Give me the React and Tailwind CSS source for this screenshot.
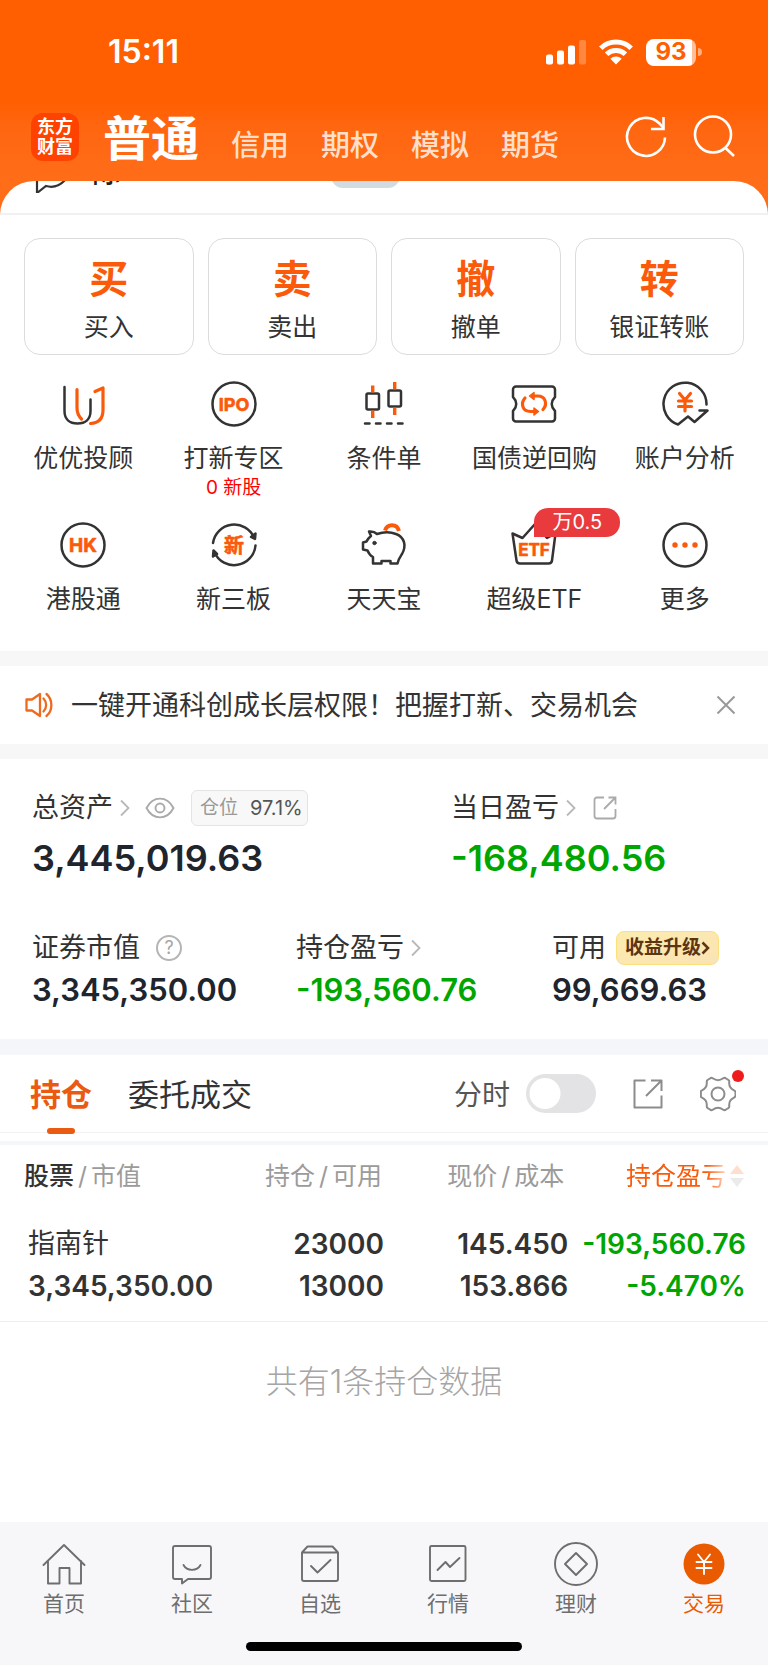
import { useState } from 'react';

const DARK = '#333333';
const ORANGE = '#fa5a0a';

/* ---------- Status bar ---------- */

const StatusBar = () => (
  <div className="flex h-[104px] items-center justify-between pl-[108px] pr-[66px] text-white">
    <time className="text-[32px] leading-9 font-semibold">15:11</time>
    <div className="flex items-center gap-3">
      <svg viewBox="0 0 40 26" className="h-[26px] w-10" fill="currentColor" aria-hidden="true">
        <rect x="0" y="15.500" width="7" height="10" rx="2" />
        <rect x="11" y="11.500" width="7" height="14" rx="2" />
        <rect x="22" y="6.500" width="7" height="19" rx="2" />
        <rect x="33" y="1" width="7" height="24.500" rx="2" opacity="0.25" />
      </svg>
      <svg viewBox="0 0 36 26" className="h-[26px] w-9" aria-hidden="true">
        <g fill="none" stroke="currentColor" strokeWidth="5">
          <path d="M2.800 9.200a22 22 0 0 1 30.400 0" />
          <path d="M8.600 15.200a13.600 13.600 0 0 1 18.800 0" />
        </g>
        <path d="M18 25.500l-5.600-5.700a8 8 0 0 1 11.200 0z" fill="currentColor" />
      </svg>
      <div className="flex items-center gap-0.5">
        <div className="flex h-[27px] w-[50px] items-center justify-center rounded-lg bg-linear-to-r from-white from-92% to-white/60 to-92% text-2xl leading-none font-bold text-[#ff5f00]">
          93
        </div>
        <span className="h-2 w-1 rounded-r-full bg-white/50" />
      </div>
    </div>
  </div>
);

/* ---------- Header ---------- */

const ACCOUNTS = ['信用', '期权', '模拟', '期货'];

const Header = () => (
  <header className="bg-linear-to-b from-[#ff5f00] from-56% via-[#ff6610] via-70% to-[#ff6d19]">
    <StatusBar />
    <div className="flex h-[77px] items-center pr-8 pl-[31px]">
      <div className="-mt-3 flex h-12 w-12 flex-col items-center justify-center rounded-xl bg-[#ff4200] text-[18px] leading-5 font-bold text-white">
        <span>东方</span>
        <span>财富</span>
      </div>
      <nav className="ml-6 flex flex-1 items-end gap-8 pb-2">
        <a href="#normal" className="text-[48px] leading-[54px] font-bold text-white">普通</a>
        {ACCOUNTS.map((name) => (
          <a key={name} href={`#${name}`} className="text-[29px] leading-10 font-medium text-[#ffdfca]">
            {name}
          </a>
        ))}
      </nav>
      <div className="-mt-3.5 flex items-center gap-6 text-white">
        <button type="button" aria-label="刷新">
          <svg viewBox="0 0 44 44" className="h-11 w-11" fill="none" stroke="currentColor" strokeWidth="2.600">
            <path d="M41 23.500A19 19 0 1 1 35.500 9.500L39 13.500" />
            <path d="M39.500 3v12H27" />
          </svg>
        </button>
        <button type="button" aria-label="搜索">
          <svg viewBox="0 0 44 44" className="h-11 w-11" fill="none" stroke="currentColor" strokeWidth="2.600">
            <circle cx="21" cy="20.500" r="18" />
            <path d="M33 33.500l9 8.500" />
          </svg>
        </button>
      </div>
    </div>
  </header>
);

/* Row that is scrolled away under the header */
const ScrolledRow = () => (
  <div className="bg-[#ff6d19]">
    <div className="flex h-[34px] items-end overflow-hidden rounded-t-[34px] border-b-2 border-[#f1f1f3] bg-white pl-8">
      <div className="mb-[26px] flex flex-1 items-end">
        <svg viewBox="0 0 40 40" className="-mb-1.5 h-10 w-10" fill="none" stroke={DARK} strokeWidth="2.200">
          <path d="M5 40V27C-4 12 8 2 20 2s23 14 14 24c-6 7-13 9-20 7z" />
        </svg>
        <span className="ml-5 text-[28px] leading-7 font-medium text-[#222222]">际</span>
      </div>
      <span className="mr-[368px] mb-[25px] h-6 w-[69px] rounded-b-xl bg-[#d3dbe2]" />
    </div>
  </div>
);

/* ---------- Trade buttons ---------- */

const TRADES = [
  { mark: '买', label: '买入' },
  { mark: '卖', label: '卖出' },
  { mark: '撤', label: '撤单' },
  { mark: '转', label: '银证转账' },
];

const TradeButtons = () => (
  <div className="grid grid-cols-4 gap-3.5 px-6 pt-[23px]">
    {TRADES.map(({ mark, label }) => (
      <button
        key={label}
        type="button"
        className="flex h-[117px] flex-col items-center gap-3 rounded-2xl border border-[#dcdcdc] pt-5"
      >
        <span className="text-[39px] leading-10 font-bold text-[#fa5a0a]">{mark}</span>
        <span className="text-[25px] leading-8 text-[#333333]">{label}</span>
      </button>
    ))}
  </div>
);

/* ---------- Function icons ---------- */

const FuncSvg = ({ children }) => (
  <svg
    viewBox="0 0 48 48"
    className="h-12 w-12"
    fill="none"
    stroke={DARK}
    strokeWidth="2.500"
    strokeLinecap="round"
    strokeLinejoin="round"
    aria-hidden="true"
  >
    {children}
  </svg>
);

const IconText = ({ size, y, children }) => (
  <text
    x="24"
    y={y}
    fontSize={size}
    fontWeight="700"
    textAnchor="middle"
    fill={ORANGE}
    stroke={ORANGE}
    strokeWidth="0.600"
  >
    {children}
  </text>
);

const AdvisorIcon = () => (
  <FuncSvg>
    <path d="M5.500 7v24c0 8 5 12.500 13 12.500S31.500 39 31.500 31V19.500" />
    <g stroke={ORANGE} strokeWidth="3.200">
      <path d="M18 9.500V28c0 5 1.500 8 4.500 11" />
      <path d="M36 11.500l8-3.500v22c0 8-4 13-12.500 13.500" />
    </g>
  </FuncSvg>
);

const IpoIcon = () => (
  <FuncSvg>
    <circle cx="24" cy="24" r="21.500" />
    <IconText size="18" y="30.500">IPO</IconText>
  </FuncSvg>
);

const CandleIcon = () => (
  <FuncSvg>
    <rect x="6.500" y="13.500" width="12.500" height="16" rx="1.500" />
    <rect x="28.500" y="10.500" width="12.500" height="16" rx="1.500" />
    <g stroke={ORANGE} strokeWidth="3.400" strokeLinecap="butt">
      <path d="M12.700 5.500v7M12.700 30.500v7.500M34.700 2v7.500M34.700 27.500V35" />
    </g>
    <path d="M5 43.500h4.500M16 43.500h4.500M27 43.500h4.500M38 43.500h4.500" />
  </FuncSvg>
);

const RepoIcon = () => (
  <FuncSvg>
    <path d="M6 6.500h36a3 3 0 0 1 3 3v7.500l-2.500 3.500q-1.500 3.500 0 7L45 31v7.500a3 3 0 0 1-3 3H6a3 3 0 0 1-3-3V31l2.500-3.500q1.500-3.500 0-7L3 17V9.500a3 3 0 0 1 3-3z" />
    <g stroke={ORANGE} strokeWidth="3.200">
      <path d="M15 18c-4.500 5-3 13.500 5.500 13.500h5" />
      <path d="M24 28l4.500 3.500-4.500 3.500z" fill={ORANGE} strokeWidth="1.500" />
      <path d="M33 29.500c4.500-5 3-13.500-5.500-13.500h-5" />
      <path d="M24 12.500L19.500 16l4.500 3.500z" fill={ORANGE} strokeWidth="1.500" />
    </g>
  </FuncSvg>
);

const AnalysisIcon = () => (
  <FuncSvg>
    <path d="M45.500 24.500A21.500 21.500 0 1 0 17 44.500l10-8 6.500 5.500 13-11.500h-8" />
    <g stroke={ORANGE} strokeWidth="3.200">
      <path d="M18.500 13.500l5.500 6.500 5.500-6.500M24 20.500V31M17.500 21h13M17.500 26.500h13" />
    </g>
  </FuncSvg>
);

const HkIcon = () => (
  <FuncSvg>
    <circle cx="24" cy="24" r="21.500" />
    <IconText size="19" y="31">HK</IconText>
  </FuncSvg>
);

const NeeqIcon = () => (
  <FuncSvg>
    <path d="M3 22A21.500 21.500 0 0 1 44 16.500M45.500 24.500A21.500 21.500 0 0 1 4.500 31.500" />
    <path d="M45.500 12.500l-.5 5.500-4-2z M3 35.500l.5-6 3.500 3.500z" fill={DARK} />
    <IconText size="20" y="31.500">新</IconText>
  </FuncSvg>
);

const PiggyIcon = () => (
  <FuncSvg>
    <path d="M9 10.500q5-.5 8 2.500c6-2 14-2 19 0 9 3.500 10.500 12 6 20-2 3-3.500 5-4.500 9.500h-7V40h-9v2.500h-8.500v-6.500c-3-1.500-4.500-4-5.500-6.500L3 28.500v-7l3.500-1c1-2.500 2-3.500 4.500-5.500z" />
    <circle cx="14.500" cy="22" r="1.700" fill={DARK} strokeWidth="1" />
    <path d="M25 9.500c2-7 12-7.500 14 .5" stroke={ORANGE} strokeWidth="4" strokeLinecap="butt" />
  </FuncSvg>
);

const EtfIcon = () => (
  <FuncSvg>
    <path d="M2.500 12.500l10 4.500L25 3l12 14 8.500-4.500-3.500 27a3.500 3.500 0 0 1-3.500 3H10a3.500 3.500 0 0 1-3.500-3z" />
    <IconText size="17" y="35">ETF</IconText>
  </FuncSvg>
);

const MoreIcon = () => (
  <FuncSvg>
    <circle cx="24" cy="24" r="21.500" />
    <g fill={ORANGE} stroke="none">
      <circle cx="14" cy="24" r="2.700" />
      <circle cx="24" cy="24" r="2.700" />
      <circle cx="34" cy="24" r="2.700" />
    </g>
  </FuncSvg>
);

const FUNCTIONS = [
  { label: '优优投顾', Icon: AdvisorIcon },
  { label: '打新专区', Icon: IpoIcon, note: '0 新股' },
  { label: '条件单', Icon: CandleIcon },
  { label: '国债逆回购', Icon: RepoIcon },
  { label: '账户分析', Icon: AnalysisIcon },
  { label: '港股通', Icon: HkIcon },
  { label: '新三板', Icon: NeeqIcon },
  { label: '天天宝', Icon: PiggyIcon },
  { label: '超级ETF', Icon: EtfIcon, badge: '万0.5' },
  { label: '更多', Icon: MoreIcon },
];

const FunctionGrid = () => (
  <div className="mt-[25px] grid grid-cols-5 gap-y-5 px-2 pb-9">
    {FUNCTIONS.map(({ label, Icon, note, badge }) => (
      <a key={label} href={`#${label}`} className="flex flex-col items-center">
        <span className="relative">
          <Icon />
          {badge && (
            <span className="absolute -top-[13px] left-6 w-[86px] rounded-t-[14px] rounded-br-[14px] bg-[#e93b3d] text-center text-[20px] leading-[29px] text-white">
              {badge}
            </span>
          )}
        </span>
        <span className="mt-3.5 text-[25px] leading-8 text-[#333333]">{label}</span>
        {note && <span className="text-[19px] leading-[27px] text-[#ff0000]">{note}</span>}
      </a>
    ))}
  </div>
);

/* ---------- Notice ---------- */

const Notice = () => (
  <div className="flex h-[78px] items-center px-6">
    <svg viewBox="0 0 30 30" className="h-[30px] w-[30px]" fill="none" stroke="#ee6a1f" strokeWidth="2.300" strokeLinejoin="round" strokeLinecap="round">
      <path d="M2.500 9.500H8L16 4v22l-8-5.500H2.500z" />
      <path d="M19.500 8.500c3.500 3.500 3.500 9.500 0 13M22.500 4c6.500 5.500 6.500 16.500 0 22" />
    </svg>
    <p className="ml-[17px] flex-1 pt-0.5 text-[27px] leading-10 text-[#333333]">一键开通科创成长层权限！把握打新、交易机会</p>
    <button type="button" aria-label="关闭" className="mr-2 text-[#999999]">
      <svg viewBox="0 0 20 20" className="h-5 w-5" fill="none" stroke="currentColor" strokeWidth="2">
        <path d="M1.500 1.500l17 17M18.500 1.500l-17 17" />
      </svg>
    </button>
  </div>
);

/* ---------- Assets ---------- */

const Chevron = () => (
  <svg viewBox="0 0 12 18" className="ml-1.5 h-[18px] w-3" fill="none" stroke="#b8b8b8" strokeWidth="1.800" aria-hidden="true">
    <path d="M2 1.500L9.500 9 2 16.500" />
  </svg>
);

const ShareIcon = ({ className }) => (
  <svg viewBox="0 0 30 30" className={className} fill="none" stroke="currentColor" strokeWidth="2" strokeLinejoin="round" aria-hidden="true">
    <path d="M12.500 1.500h-11v27h27v-12" />
    <path d="M18 1.500h10.500V12M28 2L13 17" />
  </svg>
);

const Assets = () => (
  <section className="px-8 pt-[31px] pb-[29px] text-[27px] leading-9 text-[#333333]">
    <div className="grid grid-cols-[419fr_285fr]">
      <div>
        <div className="flex h-9 items-center">
          <span>总资产</span>
          <Chevron />
          <button type="button" aria-label="隐藏资产" className="ml-3.5 text-[#aaaaaa]">
            <svg viewBox="0 0 30 22" className="h-[22px] w-[30px]" fill="none" stroke="currentColor" strokeWidth="1.900">
              <path d="M1.500 11C8-1.500 22-1.500 28.500 11 22 23.500 8 23.500 1.500 11z" />
              <circle cx="15" cy="11" r="4.500" />
            </svg>
          </button>
          <span className="ml-4 flex h-9 items-center gap-3 rounded-md border border-[#e4e4e4] bg-[#f8f8f8] pr-1 pl-2 text-[19px] text-[#999999]">
            仓位 <span className="text-[20px] text-[#555555]">97.1%</span>
          </span>
        </div>
        <p className="mt-2 text-[36px] leading-12 font-semibold text-[#20242c]">3,445,019.63</p>
      </div>
      <div>
        <div className="flex h-9 items-center">
          <span>当日盈亏</span>
          <Chevron />
          <button type="button" aria-label="分享当日盈亏" className="ml-4 text-[#aaaaaa]">
            <svg viewBox="0 0 24 24" className="h-6 w-6" fill="none" stroke="currentColor" strokeWidth="1.800">
              <path d="M11 1.500H4A2.500 2.500 0 0 0 1.500 4v16A2.500 2.500 0 0 0 4 22.500h16a2.500 2.500 0 0 0 2.500-2.500v-7" />
              <path d="M15.500 1.500h7v7M22 2L11 13" />
            </svg>
          </button>
        </div>
        <p className="mt-2 text-[36px] leading-12 font-semibold text-[#00a600]">-168,480.56</p>
      </div>
    </div>
    <div className="mt-12 grid grid-cols-[264fr_256fr_184fr]">
      <div>
        <div className="flex h-9 items-center">
          <span>证券市值</span>
          <span className="ml-4 flex h-[26px] w-[26px] items-center justify-center rounded-full border-2 border-[#b5b5b5] text-[18px] leading-none text-[#a5a5a5]">
            ?
          </span>
        </div>
        <p className="mt-1 text-[31px] leading-10 font-semibold text-[#20242c]">3,345,350.00</p>
      </div>
      <div>
        <div className="flex h-9 items-center">
          <span>持仓盈亏</span>
          <Chevron />
        </div>
        <p className="mt-1 text-[31px] leading-10 font-semibold text-[#00a600]">-193,560.76</p>
      </div>
      <div>
        <div className="flex h-9 items-center whitespace-nowrap">
          <span>可用</span>
          <a
            href="#upgrade"
            className="ml-2.5 flex h-[34px] items-center rounded-lg border border-[#fbe07c] bg-linear-to-br from-[#fcecae] to-[#fbe3b4] px-2 text-[19px] font-bold text-[#5e3510]"
          >
            收益升级
            <svg viewBox="0 0 9 14" className="h-3.5 w-[9px]" fill="none" stroke="currentColor" strokeWidth="2.500" aria-hidden="true">
              <path d="M1.500 1.500L7 7l-5.500 5.500" />
            </svg>
          </a>
        </div>
        <p className="mt-1 text-[31px] leading-10 font-semibold text-[#20242c]">99,669.63</p>
      </div>
    </div>
  </section>
);

/* ---------- Positions ---------- */

const PositionTabs = () => {
  const [tick, setTick] = useState(false);

  return (
    <div className="flex h-[78px] items-center border-b border-[#f1f2f4] pr-8 pl-[30px] text-[31px] leading-10">
      <button type="button" className="relative pt-0.5 font-bold text-[#ea5a10]">
        持仓
        <span className="absolute top-[55px] left-1/2 h-1.5 w-7 -translate-x-1/2 rounded-sm bg-[#ea5a10]" />
      </button>
      <button type="button" className="ml-9 pt-0.5 text-[#333333]">委托成交</button>
      <label htmlFor="tick" className="ml-auto pt-0.5 text-[28px] text-[#555555]">分时</label>
      <input
        id="tick"
        type="checkbox"
        role="switch"
        checked={tick}
        onChange={(e) => setTick(e.target.checked)}
        className="ml-4 h-[39px] w-[70px] appearance-none rounded-full bg-[#e3e3e5] bg-[radial-gradient(circle_at_19px_50%,#ffffff_15px,transparent_16px)] checked:bg-[#ea5a10] checked:bg-[radial-gradient(circle_at_51px_50%,#ffffff_15px,transparent_16px)]"
      />
      <button type="button" aria-label="分享持仓" className="ml-[37px] text-[#8c8c8c]">
        <ShareIcon className="h-[30px] w-[30px]" />
      </button>
      <button type="button" aria-label="设置" className="relative ml-[37px] text-[#8c8c8c]">
        <svg viewBox="0 0 36 36" className="h-9 w-9" fill="none" stroke="currentColor" strokeWidth="2" strokeLinejoin="round">
          <path d="M10 2.500q1.200-1.200 2.800-.2 5.200 3.700 10.400 0 1.600-1 2.800.2l2.300 1.300q1.200.6.900 2.500-.4 5.700 4.800 8.100c1.300.6 1.500 1.200 1.500 2.300v2.600c0 1.100-.2 1.700-1.500 2.300q-5.200 2.400-4.800 8.100.3 1.900-.9 2.500L26 33.500q-1.200 1.200-2.800.2-5.200-3.700-10.400 0-1.600 1-2.800-.2l-2.300-1.300q-1.200-.6-.9-2.500.4-5.700-4.800-8.100C.7 21 .5 20.400.9 19.300v-2.600c-.4-1.100-.2-1.700 1.100-2.300q5.200-2.400 4.800-8.100-.3-1.900.9-2.500z" />
          <circle cx="18" cy="18" r="6.500" />
        </svg>
        <span className="absolute -top-1.5 -right-2 h-3 w-3 rounded-full bg-[#ee1c1c]" />
      </button>
    </div>
  );
};

const POSITIONS = [
  {
    name: '指南针',
    value: '3,345,350.00',
    held: '23000',
    available: '13000',
    price: '145.450',
    cost: '153.866',
    profit: '-193,560.76',
    rate: '-5.470%',
  },
];

const Slash = () => <span className="mx-1">/</span>;

const PositionTable = () => (
  <table className="w-full table-fixed border-t-4 border-[#f5f6f9] text-right">
    <colgroup>
      <col className="w-[30%]" />
      <col className="w-[20%]" />
      <col className="w-[24%]" />
      <col className="w-[26%]" />
    </colgroup>
    <thead className="text-[25px] leading-8 whitespace-nowrap text-[#9b9b9b]">
      <tr className="h-16">
        <th scope="col" className="pl-6 text-left font-normal">
          <span className="font-medium text-[#333333]">股票</span><Slash />市值
        </th>
        <th scope="col" className="pr-0.5 font-normal">持仓<Slash />可用</th>
        <th scope="col" className="pr-1 font-normal">现价<Slash />成本</th>
        <th scope="col" className="pr-6 font-normal">
          <button
            type="button"
            className="inline-flex items-center gap-1 text-[#fa5a0a] [mask-image:linear-gradient(to_right,#000_68%,rgb(0_0_0/20%)_86%)]"
          >
            持仓盈亏
            <svg viewBox="0 0 14 22" className="h-[22px] w-3.5" aria-hidden="true">
              <path d="M7 0l7 9H0z" fill="#fa5a0a" />
              <path d="M7 22l7-9H0z" fill="#999999" />
            </svg>
          </button>
        </th>
      </tr>
    </thead>
    <tbody className="text-[28px] leading-[42px] font-semibold text-[#333333]">
      {POSITIONS.map((row) => (
        <tr key={row.name} className="border-b border-[#eeeeee]">
          <td className="pt-4 pb-3.5 pl-7 text-left">
            <div className="text-[27px] font-normal">{row.name}</div>
            <div>{row.value}</div>
          </td>
          <td className="pt-4 pb-3.5">
            <div>{row.held}</div>
            <div>{row.available}</div>
          </td>
          <td className="pt-4 pb-3.5">
            <div>{row.price}</div>
            <div>{row.cost}</div>
          </td>
          <td className="pt-4 pr-[22px] pb-3.5 text-[#00a600]">
            <div>{row.profit}</div>
            <div>{row.rate}</div>
          </td>
        </tr>
      ))}
    </tbody>
  </table>
);

/* ---------- Bottom navigation ---------- */

const NavSvg = ({ children }) => (
  <svg viewBox="0 0 48 48" className="h-12 w-12" fill="none" stroke="currentColor" strokeWidth="1.900" strokeLinejoin="round" strokeLinecap="round" aria-hidden="true">
    {children}
  </svg>
);

const NAV_ITEMS = [
  {
    label: '首页',
    icon: <path d="M3.500 25L24 5l20.500 20M8 21v22.500h11.500V28h10v15.500H41V21" />,
  },
  {
    label: '社区',
    icon: (
      <>
        <path d="M7 6h34a2 2 0 0 1 2 2v29a2 2 0 0 1-2 2H20l-6 4.500V39H7a2 2 0 0 1-2-2V8a2 2 0 0 1 2-2z" />
        <path d="M15.500 25c3.500 6.500 13.500 6.500 17 0" />
      </>
    ),
  },
  {
    label: '自选',
    icon: (
      <>
        <path d="M6 12.500l5.500-6h25l5.500 6V39a2 2 0 0 1-2 2H8a2 2 0 0 1-2-2zM6 12.500h36" />
        <path d="M15 26l6.500 6.500L34.500 20" />
      </>
    ),
  },
  {
    label: '行情',
    icon: (
      <>
        <rect x="6" y="6" width="35.500" height="35" rx="1.500" />
        <path d="M13.500 30l8-8 4.500 5 9.500-9" />
      </>
    ),
  },
  {
    label: '理财',
    icon: (
      <>
        <circle cx="24" cy="24" r="21" />
        <path d="M24 13l11 11-11 11-11-11z" />
      </>
    ),
  },
  {
    label: '交易',
    active: true,
    icon: (
      <>
        <circle cx="24" cy="24" r="20.500" fill="currentColor" stroke="none" />
        <path d="M18 14.500l6 7.500 6-7.500M24 22v12M16.500 22h15M16.500 28h15" stroke="#ffffff" />
      </>
    ),
  },
];

const BottomNav = () => (
  <footer className="mt-auto bg-[#f7f7fa] pt-[18px] pb-3.5">
    <nav className="grid grid-cols-6">
      {NAV_ITEMS.map(({ label, icon, active }) => (
        <a
          key={label}
          href={`#${label}`}
          className={`flex flex-col items-center ${active ? 'text-[#ea5a00]' : 'text-[#6e6e6e]'}`}
        >
          <NavSvg>{icon}</NavSvg>
          <span className="mt-0.5 text-[21px] leading-7">{label}</span>
        </a>
      ))}
    </nav>
    <div className="mx-auto mt-6 h-[9px] w-[36%] rounded-full bg-black" />
  </footer>
);

export default function App() {
  return (
    <div className="flex min-h-screen flex-col bg-white font-[Inter,'Noto_Sans_CJK_SC',sans-serif]">
      <Header />
      <main>
        <ScrolledRow />
        <TradeButtons />
        <FunctionGrid />
        <div className="h-[15px] bg-[#f7f7f7]" />
        <Notice />
        <div className="h-[15px] bg-[#f7f7f7]" />
        <Assets />
        <div className="h-4 bg-[#f5f6f9]" />
        <PositionTabs />
        <div className="mt-2">
          <PositionTable />
        </div>
        <p className="py-10 text-center text-[32px] leading-10 font-light text-[#a5a5a5]">共有1条持仓数据</p>
      </main>
      <BottomNav />
    </div>
  );
}
